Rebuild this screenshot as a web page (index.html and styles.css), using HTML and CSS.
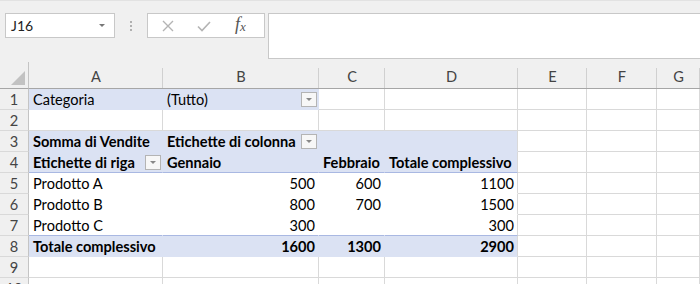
FILE: index.html
```html
<!DOCTYPE html>
<html lang="it">
  <head>
    <meta charset="UTF-8" />
    <meta name="viewport" content="width=device-width, initial-scale=1.0" />
    <title>Tabella pivot</title>
    <link rel="stylesheet" href="styles.css">
  </head>
  <body>
    <div class="bar">
      <div class="namebox">
        <span>J16</span>
        <span class="caret"></span>
      </div>
      <div class="grip"><i></i><i></i><i></i></div>
      <div class="fxbox">
        <svg class="ico" width="14" height="14" viewBox="0 0 14 14">
          <path d="M2 2 L12 12 M12 2 L2 12" stroke="#b4b4b4" stroke-width="1.4" fill="none" />
        </svg>
        <svg class="ico" width="16" height="14" viewBox="0 0 16 14">
          <path d="M2 7.5 L6 11.5 L14 3" stroke="#b4b4b4" stroke-width="1.6" fill="none" />
        </svg>
        <span class="fx">f<sub>x</sub></span>
      </div>
      <div class="formula"></div>
    </div>

    <div class="sheet">
      <div class="row head">
        <div class="corner"><span class="tri"></span></div>
        <div>A</div><div>B</div><div>C</div><div>D</div><div>E</div><div>F</div><div>G</div>
      </div>

      <div class="row">
        <div class="num">1</div>
        <div class="c pv">Categoria</div>
        <div class="c pv drop">(Tutto)<span class="btn"></span></div>
        <div class="c"></div><div class="c"></div><div class="c"></div><div class="c"></div><div class="c"></div>
      </div>

      <div class="row">
        <div class="num">2</div>
        <div class="c"></div><div class="c"></div><div class="c"></div><div class="c"></div><div class="c"></div><div class="c"></div><div class="c"></div>
      </div>

      <div class="row">
        <div class="num">3</div>
        <div class="c pv b">Somma di Vendite</div>
        <div class="c pv b drop">Etichette di colonna<span class="btn"></span></div>
        <div class="c pv"></div><div class="c pv"></div>
        <div class="c"></div><div class="c"></div><div class="c"></div>
      </div>

      <div class="row">
        <div class="num">4</div>
        <div class="c pv b under drop">Etichette di riga<span class="btn"></span></div>
        <div class="c pv b under">Gennaio</div>
        <div class="c pv b under">Febbraio</div>
        <div class="c pv b under">Totale complessivo</div>
        <div class="c"></div><div class="c"></div><div class="c"></div>
      </div>

      <div class="row">
        <div class="num">5</div>
        <div class="c body">Prodotto A</div>
        <div class="c body r">500</div>
        <div class="c body r">600</div>
        <div class="c body r">1100</div>
        <div class="c"></div><div class="c"></div><div class="c"></div>
      </div>

      <div class="row">
        <div class="num">6</div>
        <div class="c body">Prodotto B</div>
        <div class="c body r">800</div>
        <div class="c body r">700</div>
        <div class="c body r">1500</div>
        <div class="c"></div><div class="c"></div><div class="c"></div>
      </div>

      <div class="row">
        <div class="num">7</div>
        <div class="c body above">Prodotto C</div>
        <div class="c body above r">300</div>
        <div class="c body above r"></div>
        <div class="c body above r">300</div>
        <div class="c"></div><div class="c"></div><div class="c"></div>
      </div>

      <div class="row">
        <div class="num">8</div>
        <div class="c pv b">Totale complessivo</div>
        <div class="c pv b r">1600</div>
        <div class="c pv b r">1300</div>
        <div class="c pv b r">2900</div>
        <div class="c"></div><div class="c"></div><div class="c"></div>
      </div>

      <div class="row">
        <div class="num">9</div>
        <div class="c"></div><div class="c"></div><div class="c"></div><div class="c"></div><div class="c"></div><div class="c"></div><div class="c"></div>
      </div>

      <div class="row">
        <div class="num">10</div>
        <div class="c"></div><div class="c"></div><div class="c"></div><div class="c"></div><div class="c"></div><div class="c"></div><div class="c"></div>
      </div>
    </div>
  </body>
</html>
```

FILE: styles.css
```css
* {
  box-sizing: border-box;
}
body {
  margin: 0;
  background-color: #f0f0f0;
  font-family: Lato, "Open Sans", sans-serif;
  font-size: 14.6px;
  color: #000;
  overflow: hidden;
}

/* formula bar */
.bar {
  display: flex;
  align-items: flex-start;
  padding-top: 12px;
  height: 62px;
  border-top: 1px solid #e2e2e2;
}
.namebox {
  width: 110px;
  height: 25px;
  margin-left: 5px;
  background-color: #fff;
  border: 1px solid #c8c8c8;
  display: flex;
  align-items: center;
  justify-content: space-between;
  padding: 0 9px 0 5px;
  color: #222;
  font-size: 14px;
}
.caret {
  width: 0;
  height: 0;
  border-left: 3px solid transparent;
  border-right: 3px solid transparent;
  border-top: 3px solid #777;
}
.grip {
  width: 32px;
  height: 25px;
  display: flex;
  flex-direction: column;
  align-items: center;
  justify-content: center;
  gap: 2px;
}
.grip i {
  width: 2px;
  height: 2px;
  background-color: #b0b0b0;
}
.fxbox {
  width: 118px;
  height: 25px;
  background-color: #fff;
  border: 1px solid #c8c8c8;
  display: flex;
  align-items: center;
  padding-left: 13px;
  gap: 21px;
}
.fx {
  font-family: "Liberation Serif", serif;
  font-style: italic;
  font-size: 18px;
  line-height: 20px;
  color: #555;
  margin-left: 2px;
}
.fx sub {
  font-size: 13px;
  vertical-align: -1px;
}
.formula {
  flex: 1;
  height: 46px;
  margin-left: 3px;
  background-color: #fff;
  border: 1px solid #c8c8c8;
  border-right: none;
}

/* sheet grid */
.sheet {
  background-color: #fff;
}
.row {
  display: grid;
  grid-template-columns: 29px 134px 156px 66px 133px 69px 70px 1fr;
  height: 21px;
}
.row > div {
  border-right: 1px solid #d9d9d9;
  border-bottom: 1px solid #d9d9d9;
  line-height: 21px;
  white-space: nowrap;
  overflow: hidden;
}
.head {
  height: 27px;
  background-color: #f0f0f0;
}
.head > div {
  line-height: 26px;
  padding-top: 2px;
  text-align: center;
  color: #444;
  border-right: none;
  border-bottom: 1px solid #a6a6a6;
  background: linear-gradient(#d0d0d0, #d0d0d0) right bottom / 1px 20px no-repeat;
}
.head > .corner {
  position: relative;
  border-right: 1px solid #c4c4c4;
  background: none;
}
.tri {
  position: absolute;
  right: 3px;
  bottom: 3px;
  width: 0;
  height: 0;
  border-left: 14px solid transparent;
  border-bottom: 14px solid #c2c2c2;
}
.row > .num {
  background-color: #f0f0f0;
  text-align: center;
  color: #444;
  border-right-color: #c4c4c4;
}
.c {
  padding: 0 3px 0 4px;
}
.c.r {
  text-align: right;
}
.c.b {
  font-weight: bold;
}
.row > .pv {
  background-color: #dbe2f3;
  border-right-color: #dbe2f3;
  border-bottom-color: #dbe2f3;
}
.row > .pv:nth-child(5) {
  border-right-color: #d9d9d9;
}
.row > .under {
  border-bottom-color: #a9b8e2;
}
.row > .body {
  border-right-color: #fff;
  border-bottom-color: #fff;
}
.row > .body:nth-child(5) {
  border-right-color: #d9d9d9;
}
.row > .above {
  border-bottom-color: #a9b8e2;
}
.drop {
  display: flex;
  align-items: center;
  justify-content: space-between;
}
.btn {
  width: 16px;
  height: 15px;
  margin-right: -2px;
  border: 1px solid #b4b4b4;
  background-color: #f7f7f7;
  display: flex;
  align-items: center;
  justify-content: center;
}
.btn::after {
  content: "";
  border-left: 3px solid transparent;
  border-right: 3px solid transparent;
  border-top: 3px solid #888;
}
```
